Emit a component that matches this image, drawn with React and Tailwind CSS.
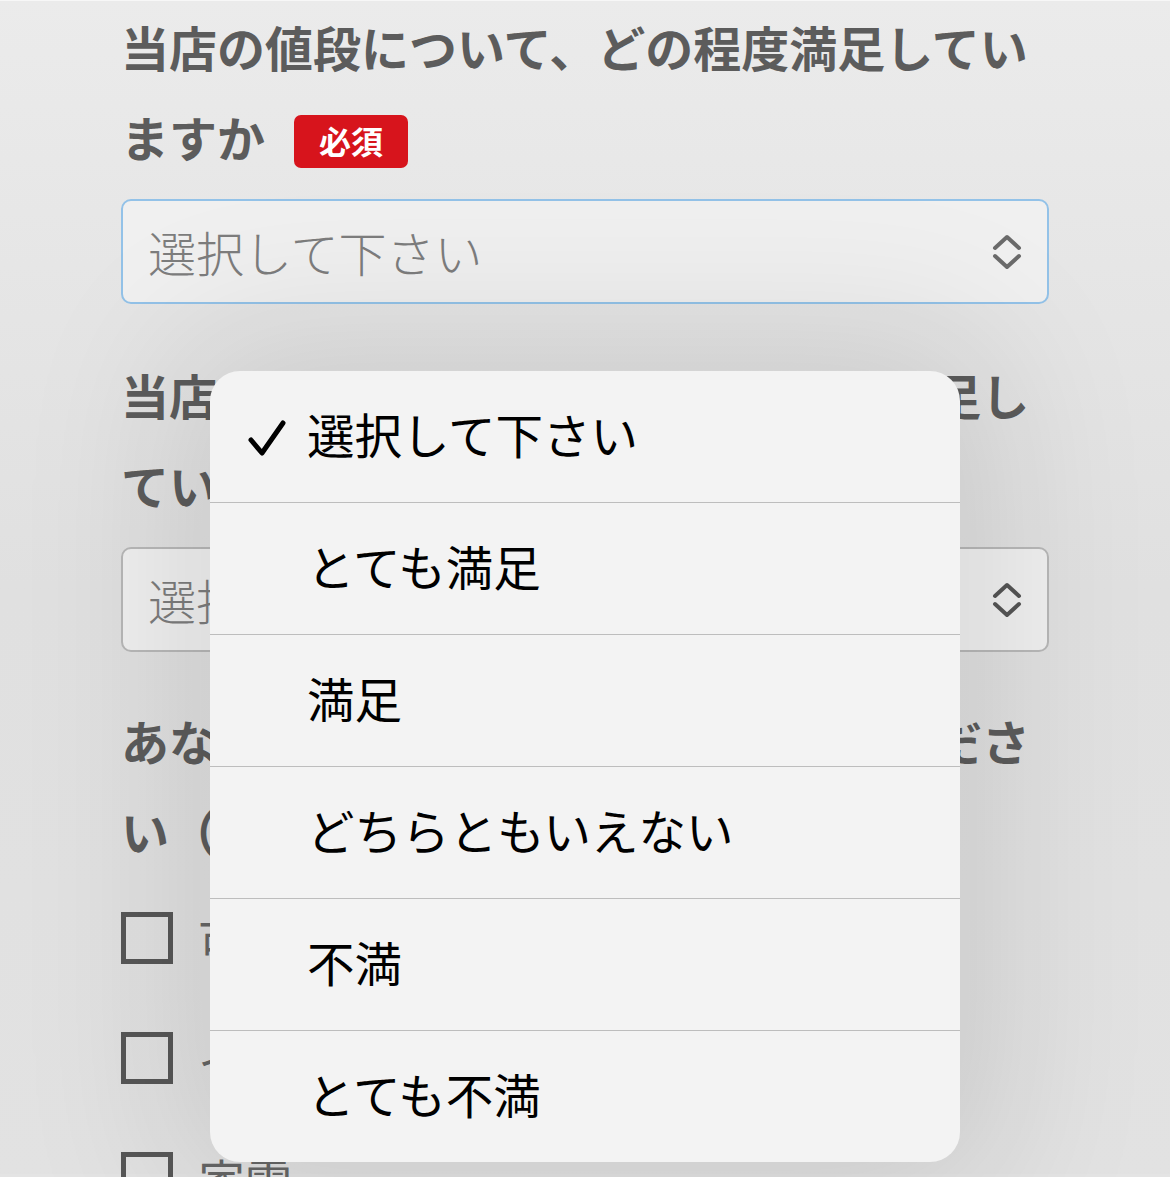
import React from "react";

const FONT = { fontFamily: '"Noto Sans CJK JP", "Noto Sans", sans-serif' };

function Chevrons({ color }) {
  return (
    <svg width="32" height="36" viewBox="0 0 32 36" fill="none" stroke={color} strokeWidth="4" strokeLinecap="round" strokeLinejoin="round">
      <path d="M4 14 L16 3 L28 14" />
      <path d="M4 22 L16 33 L28 22" />
    </svg>
  );
}

function Select({ border, chevron }) {
  return (
    <div className={`mt-[18px] h-[105px] rounded-[10px] border-2 ${border} bg-[#f0f0f0] flex items-center justify-between pl-[25px] pr-[24px]`}>
      <span className="text-[48px] font-light text-[#7d7d7d] leading-none pb-[2px]">選択して下さい</span>
      <Chevrons color={chevron} />
    </div>
  );
}

function Checkbox({ label }) {
  return (
    <div className="flex items-center h-[52px] mb-[68px]">
      <div className="w-[52px] h-[52px] border-[5px] border-[#575757] shrink-0" />
      <span className="ml-[25px] text-[47px] text-[#666] leading-none">{label}</span>
    </div>
  );
}

function Badge() {
  return (
    <span className="inline-flex align-middle ml-[29px] mb-[4px] items-center justify-center w-[114px] h-[53px] rounded-[7px] bg-[#d7141c] text-white text-[32px] font-bold leading-none pb-[3px]">必須</span>
  );
}

const OPTIONS = ["選択して下さい", "とても満足", "満足", "どちらともいえない", "不満", "とても不満"];

export default function App() {
  return (
    <div className="relative w-[1170px] h-[1177px] overflow-hidden bg-[#e4e4e4]" style={FONT}>
      <div className="h-[4px] bg-[#f7f7f7]" />
      <div className="px-[121px] bg-gradient-to-b from-[#ebebeb] via-[#e0e0e0] to-[#e2e2e2] h-[1173px]">
        <div className="-mt-[3px] text-[48px] font-bold text-[#5c5c5c] leading-[90px]">
          当店の値段について、どの程度満足していますか
          <Badge />
        </div>
        <Select border="border-[#93c2e8]" chevron="#6b6b6b" />

        <div className="mt-[45px] text-[48px] font-bold text-[#5c5c5c] leading-[90px]">
          当店のサービスについて、どの程度満足していますか
          <Badge />
        </div>
        <Select border="border-[#b8b8b8]" chevron="#555555" />

        <div className="mt-[43px] text-[48px] font-bold text-[#5c5c5c] leading-[90px]">
          あなたが興味のあるものを選択してください（複数選択可）
        </div>
        <div className="mt-[37px]">
          <Checkbox label="可愛い雑貨" />
          <Checkbox label="インテリア" />
          <Checkbox label="家電" />
        </div>
      </div>

      <div className="absolute left-[210px] top-[371px] w-[750px] h-[791px] rounded-[30px] bg-[#f3f3f3] overflow-hidden shadow-[0_0_160px_40px_rgba(0,0,0,0.10)]">
        {OPTIONS.map((opt, i) => (
          <div
            key={opt}
            className={`relative flex items-center pl-[97px] pb-[6px] ${i === 0 ? "h-[131px]" : "h-[132px] border-t border-[#bdbdbd]"}`}
          >
            {i === 0 && (
              <svg className="absolute left-[36px] top-[48px]" width="42" height="40" viewBox="0 0 42 40" fill="none" stroke="#000" strokeWidth="5" strokeLinecap="round" strokeLinejoin="round">
                <path d="M5 21 L16 34 L37 4" />
              </svg>
            )}
            <span className="text-[47.5px] text-black leading-none">{opt}</span>
          </div>
        ))}
      </div>
    </div>
  );
}
